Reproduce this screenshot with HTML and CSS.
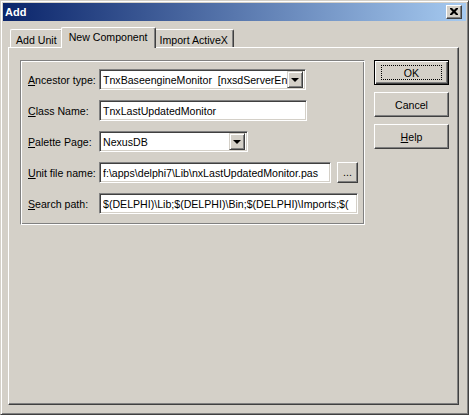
FILE: index.html
```html
<!DOCTYPE html>
<html>
<head>
<meta charset="utf-8">
<link rel="stylesheet" href="styles.css">
</head>
<body>
<div class="window">
  <div class="titlebar">
    <span class="title">Add</span>
    <div class="close-btn">
      <svg width="8" height="7" viewBox="0 0 8 7"><path d="M0 0h2l2 2 2-2h2v1l-2.5 2.5L8 6v1H6L4 5 2 7H0V6l2.5-2.5L0 1z" fill="#000"/></svg>
    </div>
  </div>
  <div class="tabs">
    <div class="tab first">Add Unit</div>
    <div class="tab active">New Component</div>
    <div class="tab">Import ActiveX</div>
  </div>
  <div class="page">
    <div class="group">
      <div class="row">
        <label class="lbl"><u>A</u>ncestor type:</label>
        <div class="edit combo w-anc"><span class="val">TnxBaseengineMonitor&nbsp; [nxsdServerEn</span><span class="drop"><i class="arrow"></i></span></div>
      </div>
      <div class="row">
        <label class="lbl"><u>C</u>lass Name:</label>
        <div class="edit w-cls"><span class="val">TnxLastUpdatedMonitor</span></div>
      </div>
      <div class="row">
        <label class="lbl"><u>P</u>alette Page:</label>
        <div class="edit combo w-pal"><span class="val">NexusDB</span><span class="drop"><i class="arrow"></i></span></div>
      </div>
      <div class="row">
        <label class="lbl"><u>U</u>nit file name:</label>
        <div class="edit w-unit"><span class="val">f:\apps\delphi7\Lib\nxLastUpdatedMonitor.pas</span></div>
        <div class="btn dots">...</div>
      </div>
      <div class="row">
        <label class="lbl"><u>S</u>earch path:</label>
        <div class="edit w-srch"><span class="val">$(DELPHI)\Lib;$(DELPHI)\Bin;$(DELPHI)\Imports;$(</span></div>
      </div>
    </div>
    <div class="buttons">
      <div class="btn push default"><span class="focus">OK</span></div>
      <div class="btn push">Cancel</div>
      <div class="btn push"><span><u>H</u>elp</span></div>
    </div>
  </div>
</div>
</body>
</html>
```
FILE: styles.css
```css
* { box-sizing: border-box; }
html, body { margin: 0; padding: 0; }
body {
  width: 469px;
  height: 415px;
  background: #d4d0c8;
  font-family: "Liberation Sans", Arial, sans-serif;
  font-size: 10.6px;
  color: #000;
}
.window {
  width: 469px;
  height: 415px;
  background: #d4d0c8;
  border: 1px solid;
  border-color: #d4d0c8 #404040 #404040 #d4d0c8;
  box-shadow: inset 1px 1px #fff, inset -1px -1px #808080;
  padding: 2px;
  display: flex;
  flex-direction: column;
}
.titlebar {
  height: 18px;
  background: linear-gradient(to right, #0a246a, #a6caf0);
  display: flex;
  align-items: center;
  justify-content: space-between;
  padding: 0 4px 0 2px;
  flex: none;
}
.title {
  color: #fff;
  font-weight: bold;
  font-size: 11px;
  font-family: "Liberation Sans", Arial, sans-serif;
}
.close-btn {
  width: 16px;
  height: 14px;
  background: #d4d0c8;
  border: 1px solid;
  border-color: #fff #404040 #404040 #fff;
  box-shadow: inset -1px -1px #808080;
  display: flex;
  align-items: center;
  justify-content: center;
  padding-bottom: 1px;
}
.tabs {
  display: flex;
  align-items: flex-end;
  height: 26px;
  padding-left: 7px;
  flex: none;
  position: relative;
  z-index: 1;
}
.tab {
  height: 18px;
  padding: 2px 5px 0 5px;
  display: flex;
  align-items: center;
  border-top: 1px solid #fff;
  border-left: 1px solid #fff;
  border-right: 1px solid #404040;
  box-shadow: inset -1px 0 #808080;
  border-radius: 2px 2px 0 0;
  background: #d4d0c8;
  white-space: nowrap;
}
.tab.active {
  height: 21px;
  margin: 0 -2px -1px -2px;
  padding: 0 7px 2px 7px;
  position: relative;
  z-index: 2;
}
.page {
  flex: 1;
  margin: 0 7px 7px 5px;
  border: 1px solid;
  border-color: #fff #404040 #404040 #fff;
  box-shadow: inset -1px -1px #808080;
  display: flex;
  align-items: flex-start;
  padding: 12px 9px 0 11px;
}
.group {
  width: 345px;
  border: 1px solid;
  border-color: #808080 #fff #fff #808080;
  box-shadow: inset 1px 1px #fff, inset -1px -1px #808080;
  padding: 8px 6px 10px 7px;
  display: flex;
  flex-direction: column;
  gap: 10px;
}
.row {
  display: flex;
  align-items: center;
  height: 21px;
}
.lbl {
  width: 71px;
  flex: none;
  white-space: nowrap;
}
.edit {
  height: 21px;
  background: #fff;
  border: 1px solid;
  border-color: #808080 #fff #fff #808080;
  box-shadow: inset 1px 1px #404040, inset -1px -1px #d4d0c8;
  display: flex;
  align-items: center;
  padding: 0 2px 0 3px;
  overflow: hidden;
  white-space: nowrap;
  flex: none;
}
.val { flex: 1; overflow: hidden; }
.drop {
  width: 16px;
  height: 17px;
  flex: none;
  background: #d4d0c8;
  border: 1px solid;
  border-color: #d4d0c8 #404040 #404040 #d4d0c8;
  box-shadow: inset 1px 1px #fff, inset -1px -1px #808080;
  display: flex;
  align-items: center;
  justify-content: center;
}
.arrow {
  width: 0;
  height: 0;
  border-left: 4px solid transparent;
  border-right: 4px solid transparent;
  border-top: 4px solid #000;
  margin-top: 1px;
}
.w-anc { width: 207px; }
.w-cls { width: 208px; }
.w-pal { width: 149px; }
.w-unit { width: 232px; }
.w-srch { width: 259px; }
.btn {
  background: #d4d0c8;
  border: 1px solid;
  border-color: #fff #404040 #404040 #fff;
  box-shadow: inset -1px -1px #808080;
  display: flex;
  align-items: center;
  justify-content: center;
  flex: none;
}
.dots {
  width: 21px;
  height: 21px;
  margin-left: 6px;
  padding-bottom: 2px;
}
.buttons {
  margin-left: auto;
  display: flex;
  flex-direction: column;
  gap: 7px;
}
.push {
  width: 75px;
  height: 25px;
}
.default {
  border: 1px solid #000;
  box-shadow: inset 1px 1px #fff, inset -1px -1px #404040, inset -2px -2px #808080;
}
.focus {
  width: 61px;
  height: 15px;
  border: 1px dotted #000;
  display: flex;
  align-items: center;
  justify-content: center;
}
```
